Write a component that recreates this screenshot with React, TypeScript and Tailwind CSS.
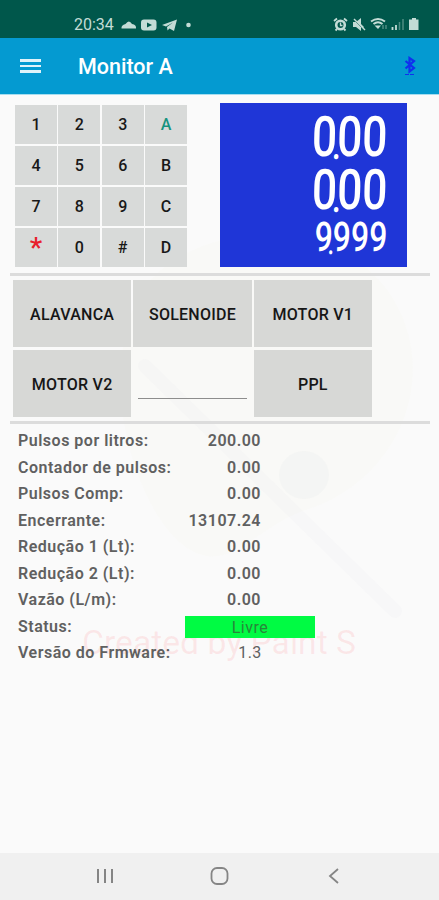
import React from "react";

const keys = ["1", "2", "3", "A", "4", "5", "6", "B", "7", "8", "9", "C", "*", "0", "#", "D"];

const readings = [
  { label: "Pulsos por litros:", value: "200.00" },
  { label: "Contador de pulsos:", value: "0.00" },
  { label: "Pulsos Comp:", value: "0.00" },
  { label: "Encerrante:", value: "13107.24" },
  { label: "Redução 1 (Lt):", value: "0.00" },
  { label: "Redução 2 (Lt):", value: "0.00" },
  { label: "Vazão (L/m):", value: "0.00" },
];

const keyColor = (key: string) => {
  if (key === "A") return "text-[#16937f]";
  if (key === "*") return "text-[#e8202c]";
  return "text-[#181818]";
};

const StatusBar = () => (
  <div className="h-[38px] bg-[#00574b] flex items-start justify-between pt-[15px] pl-[74px] pr-[19px] text-[#c3dcd6]">
    <div className="flex items-center h-5">
      <span className="text-[16px] leading-5 w-[46px]">20:34</span>
      <svg width="72" height="14" viewBox="0 0 72 14" fill="currentColor">
        <path d="M1.500 10.500q-.5-3.500 4-4.500 3.500-5 6.500 0 4.500 .5 4 4.500z" />
        <rect x="21" y="1.500" width="15.500" height="11" rx="3" />
        <path d="M27 4.500l5 2.500-5 2.500z" fill="#00574b" />
        <path d="M42 7L57 1.500l-3 11.500-4.500-2.500-2 2-.5-3.500L53 4.500l-7 4z" />
        <circle cx="68.500" cy="7" r="2.300" />
      </svg>
    </div>
    <svg width="88" height="16" viewBox="0 0 88 16" fill="none" stroke="currentColor" className="mt-[2px]">
      {/* Alarm */}
      <circle cx="8.500" cy="8" r="4.300" strokeWidth="2.600" />
      <path d="M2 4l3-2.500M12 1.500l3 2.500M5 12l-1.500 1.500M12 12l1.500 1.500" strokeWidth="1.800" />
      <path d="M8.500 5.500v3h2" strokeWidth="1.300" />
      {/* Muted */}
      <path d="M21 5h3l5-4v6l3 3-1 1-2-2v5l-5-4h-3z" fill="currentColor" stroke="none" />
      <path d="M21 2l11 11" stroke="#00574b" />
      <path d="M22 2l11 11" strokeWidth="1.400" />
      {/* Wifi */}
      <path d="M39 4.500q7-5 14 0M41.500 7q4.500-3.500 9 0" strokeWidth="2" />
      <path d="M42.500 8.500h6.500L46 12z" fill="currentColor" stroke="none" />
      <path d="M51 8v4M54 8v4" strokeWidth="1" opacity=".6" />
      {/* Signal */}
      <path d="M60.500 10v3M64 8v5" strokeWidth="1.800" />
      <path d="M67.500 5v8M71 2v11" strokeWidth="1.500" opacity=".4" />
      {/* Battery */}
      <path d="M80 1h4v1.500h2.500V13H77V2.500h3z" fill="currentColor" stroke="none" />
    </svg>
  </div>
);

const AppBar = () => (
  <div className="h-[57px] bg-[#049ad1] border-b border-[#a6ddef] flex items-center pl-5 pr-[22px]">
    <div className="flex flex-col gap-[3px] w-[58px]">
      <div className="h-[2.500px] w-[21px] bg-[#dff3fa]" />
      <div className="h-[2.500px] w-[21px] bg-[#dff3fa]" />
      <div className="h-[2.500px] w-[21px] bg-[#dff3fa]" />
    </div>
    <h1 className="text-[21.500px] font-medium text-white leading-7 grow pt-px">Monitor A</h1>
    <svg width="14" height="20" viewBox="0 0 14 20" fill="none" stroke="#1030ee" strokeWidth="2.200">
      <path d="M2.500 5l8.500 7-4.500 3.500V2l4.500 3-8.500 7.500" />
      <path d="M2 18.500h10" strokeWidth="1" strokeDasharray="4 1" />
    </svg>
  </div>
);

const Keypad = () => (
  <div className="grid grid-cols-4 grid-rows-4 gap-[1.500px] w-[172px] h-[162px]">
    {keys.map((key) => (
      <div
        key={key}
        className={`bg-[#d6d8d7]/95 flex items-center justify-center text-[16px] font-medium min-h-0 pt-px ${keyColor(key)}`}
      >
        {key === "*" ? <span className="text-[28px] leading-none">*</span> : key}
      </div>
    ))}
  </div>
);

const DisplayLine = ({ value }: { value: string }) => {
  const [whole, decimals] = value.split(".");
  return (
    <>
      {whole}
      <span className="inline-block w-0 text-[0.72em] -translate-x-[6px] translate-y-[3px]">.</span>
      {decimals}
    </>
  );
};

const Display = () => (
  <div className="w-[187px] h-[164px] bg-[#1f36d7] text-white font-medium flex flex-col items-end pt-[7px] pr-[20px]">
    <div className="h-[53px] text-[56px] leading-[54px] origin-right scale-x-[0.79] -skew-x-2 whitespace-nowrap">
      <DisplayLine value="0.00" />
    </div>
    <div className="h-[53px] text-[56px] leading-[54px] origin-right scale-x-[0.79] -skew-x-2 whitespace-nowrap">
      <DisplayLine value="0.00" />
    </div>
    <div className="h-[44px] text-[41px] leading-[43px] origin-right scale-x-[0.78] -skew-x-2 whitespace-nowrap">
      <DisplayLine value="9.999" />
    </div>
  </div>
);

const ActionButton = ({ children }: { children: React.ReactNode }) => (
  <button className="bg-[#d5d6d4]/95 text-[#161616] text-[16px] tracking-[0.25px] font-medium flex items-center justify-center pt-[3px]">
    {children}
  </button>
);

const Divider = () => <div className="h-[3px] mx-[9.500px] bg-[#dcdcdc]" />;

// Faint palette and brush behind the controls
const Watermark = () => (
  <div className="absolute inset-x-0 top-[91px] h-[480px] pointer-events-none">
    <svg width="439" height="440" viewBox="0 0 439 440" fill="none">
      <path
        d="M142 105C190 35 330 25 388 105c55 78 15 190-85 220-55 20-80 75-130 25-45-50-75-170-31-245z"
        fill="#eee8c5"
        opacity=".06"
      />
      <ellipse cx="304" cy="289" rx="25" ry="24" fill="#d8dedf" opacity=".13" />
      <ellipse cx="190" cy="125" rx="30" ry="24" fill="#eb9ba0" opacity=".03" />
      <path d="M145 180L395 425" stroke="#cbd3dc" strokeWidth="14" strokeLinecap="round" opacity=".06" />
    </svg>
    <div className="absolute top-[439px] left-[82px] text-[33.700px] leading-9 text-[#ff5c66]/12 whitespace-nowrap">
      Created by Paint S
    </div>
  </div>
);

const Readings = () => (
  <div className="pt-[4px] pl-[18px] text-[16px] tracking-[0.5px] text-[#606060] font-semibold">
    {readings.map(({ label, value }) => (
      <div key={label} className="flex items-center h-[26.500px]">
        <span className="w-[160px] whitespace-nowrap">{label}</span>
        <span className="w-[83px] text-right">{value}</span>
      </div>
    ))}
    <div className="flex items-center h-[26.500px]">
      <span className="w-[167px]">Status:</span>
      <span className="w-[130px] h-[22px] leading-[23px] bg-[#00fb43] text-[#28863a] text-center font-normal">
        Livre
      </span>
    </div>
    <div className="flex items-center h-[26.500px]">
      <span className="w-[167px] whitespace-nowrap">Versão do Frmware:</span>
      <span className="w-[130px] text-center font-normal">1.3</span>
    </div>
  </div>
);

const NavBar = () => (
  <div className="h-[47px] bg-[#f0f0f0] flex items-center px-[96px] pb-px justify-between">
    <svg width="18" height="18" viewBox="0 0 18 18" stroke="#858585" strokeWidth="2">
      <path d="M2 2v14M9 2v14M16 2v14" />
    </svg>
    <svg width="20" height="20" viewBox="0 0 20 20" fill="none" stroke="#858585" strokeWidth="1.800">
      <rect x="1.500" y="2" width="16" height="16" rx="5.500" />
    </svg>
    <svg width="18" height="18" viewBox="0 0 18 18" fill="none" stroke="#858585" strokeWidth="1.800">
      <path d="M13 2L5 9l8 7" />
    </svg>
  </div>
);

const App = () => {
  return (
    <div className="w-full h-[900px] bg-[#fafafa] flex flex-col overflow-hidden font-[Roboto,sans-serif]">
      <StatusBar />
      <AppBar />
      <main className="relative grow">
        <Watermark />
        <div className="relative">
          <div className="flex h-[177.500px] pt-[7.500px] pl-[15px]">
            <div className="pt-[2.500px] w-[205px]">
              <Keypad />
            </div>
            <Display />
          </div>
          <Divider />
          <div className="grid grid-cols-3 grid-rows-2 gap-x-[2px] gap-y-[2.500px] w-[359px] h-[136.500px] ml-[13px] mt-[4.500px] mb-[4.500px]">
            <ActionButton>ALAVANCA</ActionButton>
            <ActionButton>SOLENOIDE</ActionButton>
            <ActionButton>MOTOR V1</ActionButton>
            <ActionButton>MOTOR V2</ActionButton>
            <div className="px-[5px] pb-[18px] flex min-h-0">
              <input className="w-full border-b border-[#8d8d8d] outline-none" />
            </div>
            <ActionButton>PPL</ActionButton>
          </div>
          <Divider />
          <Readings />
        </div>
      </main>
      <NavBar />
    </div>
  );
};

export default App;
